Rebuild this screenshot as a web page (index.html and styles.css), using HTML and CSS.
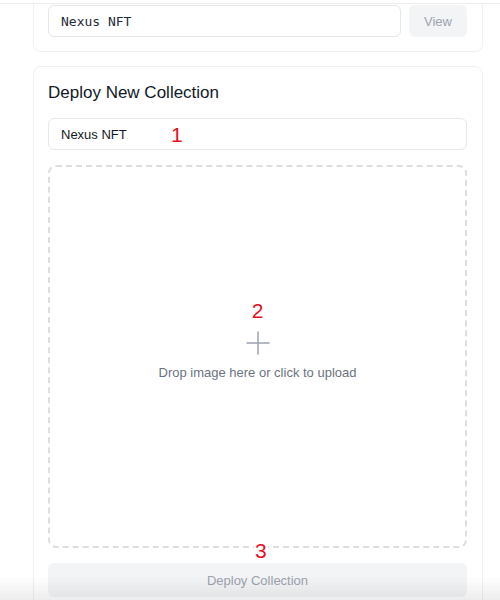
FILE: index.html
```html
<!DOCTYPE html>
<html lang="en">
<head>
  <meta charset="UTF-8" />
  <title>Collections</title>
  <link rel="stylesheet" href="styles.css">
</head>
<body>
  <div class="top-line"></div>

  <div class="page">
    <!-- Ver colección existente -->
    <div class="card card-cut">
      <div class="row">
        <input class="field mono" type="text" value="Nexus NFT" />
        <button class="btn-view" disabled>View</button>
      </div>
    </div>

    <!-- Nueva colección -->
    <div class="card">
      <h2>Deploy New Collection</h2>
      <div class="mark-wrap">
        <input class="field" type="text" value="Nexus NFT" />
        <span class="mark mark-1">1</span>
      </div>

      <div class="mark-wrap">
        <label class="dropzone">
          <span class="mark-inline">2</span>
          <svg width="24" height="24" viewBox="0 0 24 24" fill="none" stroke="#9ca3af" stroke-width="1.5" stroke-linecap="round">
            <path d="M12 1v22M1 12h22" />
          </svg>
          <span class="drop-text">Drop image here or click to upload</span>
        </label>
        <span class="mark mark-3">3</span>
      </div>

      <button class="btn-deploy" disabled>Deploy Collection</button>
    </div>
  </div>

  <div class="fade"></div>
</body>
</html>
```

FILE: styles.css
```css
body {
  margin: 0;
  font-family: "Liberation Sans", Arial, sans-serif;
  background-color: #ffffff;
  color: #111827;
  overflow: hidden;
}

/* Línea superior */
.top-line {
  height: 3px;
  border-bottom: 1px solid #ededed;
}

.page {
  padding: 0 17px 0 33px;
  display: flex;
  flex-direction: column;
  gap: 14px;
}

.card {
  border: 1px solid #f0f0f0;
  border-radius: 8px;
  padding: 14px 15px 20px 14px;
  display: flex;
  flex-direction: column;
  gap: 15px;
}

.card-cut {
  border-top: none;
  border-radius: 0 0 8px 8px;
  padding-top: 1px;
  padding-bottom: 14px;
}

.row {
  display: flex;
  gap: 8px;
}

.field {
  box-sizing: border-box;
  width: 100%;
  height: 32px;
  border: 1px solid #e5e7eb;
  border-radius: 6px;
  padding: 0 12px;
  font-family: "Liberation Sans", Arial, sans-serif;
  font-size: 13px;
  color: #111827;
  background: #ffffff;
  outline: none;
}

.field.mono {
  flex: 1;
  font-family: "DejaVu Sans Mono", monospace;
  font-size: 13px;
  color: #1f2937;
}

.btn-view {
  width: 58px;
  height: 32px;
  border: none;
  border-radius: 6px;
  background-color: #f3f4f6;
  color: #9ca3af;
  font-family: "Liberation Sans", Arial, sans-serif;
  font-size: 13px;
}

.card h2 {
  margin: 0;
  font-size: 17px;
  font-weight: normal;
  line-height: 22px;
  margin-top: 1px;
  margin-bottom: -1px;
  color: #111827;
}

.mark-wrap {
  position: relative;
}

/* Números de anotación */
.mark {
  position: absolute;
  color: #e8101e;
  font-size: 21px;
  line-height: 1;
}

.mark-1 {
  left: 123px;
  top: 6px;
}

.mark-3 {
  left: 206px;
  bottom: -13px;
  background: #ffffff;
  padding: 0 1px;
}

.mark-inline {
  color: #e8101e;
  font-size: 21px;
  line-height: 1;
  margin-bottom: 10px;
}

.dropzone {
  box-sizing: border-box;
  height: 383px;
  border: 2px dashed #dcdee2;
  border-radius: 8px;
  display: flex;
  flex-direction: column;
  align-items: center;
  justify-content: center;
  cursor: pointer;
  padding-bottom: 34px;
}

.drop-text {
  margin-top: 10px;
  font-size: 13px;
  color: #6b7280;
}

.btn-deploy {
  height: 34px;
  border: none;
  border-radius: 6px;
  background-color: #f3f4f6;
  color: #9ca3af;
  font-family: "Liberation Sans", Arial, sans-serif;
  font-size: 13px;
}

/* Sombra inferior */
.fade {
  position: fixed;
  left: 0;
  right: 0;
  bottom: 0;
  height: 24px;
  background: linear-gradient(to bottom, rgba(0, 0, 0, 0), rgba(0, 0, 0, 0.07));
  pointer-events: none;
}
```
